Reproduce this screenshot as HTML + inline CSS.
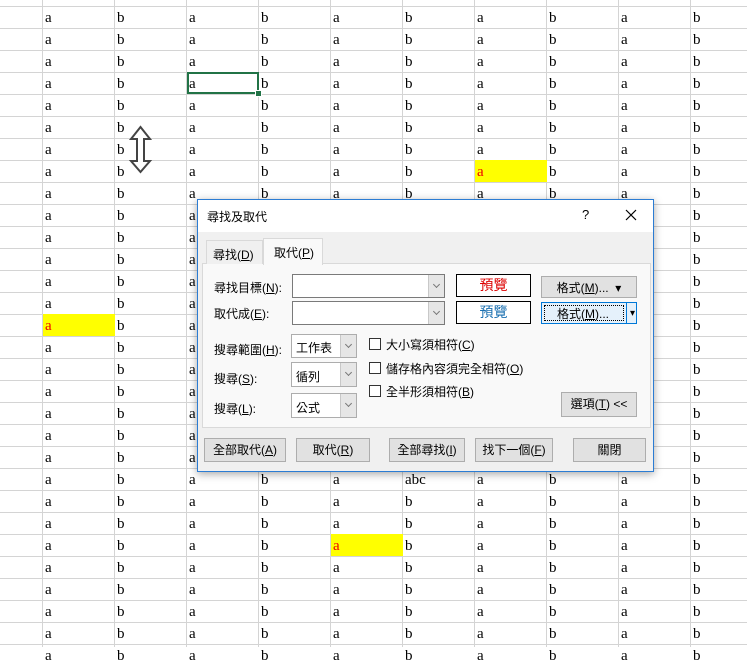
<!DOCTYPE html>
<html><head><meta charset="utf-8"><style>
body{margin:0;width:747px;height:647px;overflow:hidden;position:relative;background:#fff;font-family:"Liberation Serif","Noto Serif CJK SC",serif}
#grid{position:absolute;left:0;top:0;width:747px;height:647px;
background-image:linear-gradient(to right,transparent 71px,#d4d4d4 71px),linear-gradient(to bottom,transparent 21px,#d4d4d4 21px);
background-size:72px 100%,100% 22px;background-position:-29px 0,0 -15px}
table{position:absolute;left:0;top:-16px;width:763px;border-collapse:collapse;table-layout:fixed;font-size:15px;color:#000}
td{height:22px;padding:0 0 0 2px;vertical-align:bottom;line-height:19px;overflow:hidden;white-space:nowrap;box-sizing:border-box}
td.y{background:#ffff00;color:#e00}
#dlg,#dlg *{font-family:"Liberation Sans","Noto Sans CJK TC",sans-serif}
.d{position:absolute;font-size:12px;color:#000;white-space:nowrap}
#dlg{position:absolute;left:197px;top:199px;width:455px;height:271px;border:1px solid #2b7cd3;background:#f0f0f0;box-shadow:0 2px 8px rgba(0,0,0,.35)}
.b{position:absolute;background:#e1e1e1;border:1px solid #adadad;box-sizing:border-box;text-align:center;font-size:12px;line-height:22px;white-space:nowrap}
.cb{position:absolute;background:#fff;border:1px solid #7a7a7a;box-sizing:border-box}
.ar{position:absolute;top:0;right:0;width:16px;height:100%;background:#e6e6e6;border-left:1px solid #c8c8c8;box-sizing:border-box}
.ar:after{content:"";position:absolute;left:5px;top:7px;width:4px;height:4px;border-right:1px solid #777;border-bottom:1px solid #777;transform:rotate(45deg)}
.ck{position:absolute;width:12px;height:12px;border:1px solid #333;background:#fff;box-sizing:border-box}
u{text-decoration:underline}
</style></head><body>
<div id="grid"></div>
<table>
<colgroup><col style="width:43px"><col style="width:72px"><col style="width:72px"><col style="width:72px"><col style="width:72px"><col style="width:72px"><col style="width:72px"><col style="width:72px"><col style="width:72px"><col style="width:72px"><col style="width:72px"></colgroup>
<tr><td><td>a<td>b<td>a<td>b<td>a<td>b<td>a<td>b<td>a<td>b
<tr><td><td>a<td>b<td>a<td>b<td>a<td>b<td>a<td>b<td>a<td>b
<tr><td><td>a<td>b<td>a<td>b<td>a<td>b<td>a<td>b<td>a<td>b
<tr><td><td>a<td>b<td>a<td>b<td>a<td>b<td>a<td>b<td>a<td>b
<tr><td><td>a<td>b<td style="outline:2px solid #217346;outline-offset:-2px;position:relative;overflow:visible">a<span style="position:absolute;right:-3px;bottom:-3px;width:5px;height:5px;background:#217346;border:1px solid #fff"></span><td>b<td>a<td>b<td>a<td>b<td>a<td>b
<tr><td><td>a<td>b<td>a<td>b<td>a<td>b<td>a<td>b<td>a<td>b
<tr><td><td>a<td>b<td>a<td>b<td>a<td>b<td>a<td>b<td>a<td>b
<tr><td><td>a<td>b<td>a<td>b<td>a<td>b<td>a<td>b<td>a<td>b
<tr><td><td>a<td>b<td>a<td>b<td>a<td>b<td class="y">a<td>b<td>a<td>b
<tr><td><td>a<td>b<td>a<td>b<td>a<td>b<td>a<td>b<td>a<td>b
<tr><td><td>a<td>b<td>a<td>b<td>a<td>b<td>a<td>b<td>a<td>b
<tr><td><td>a<td>b<td>a<td>b<td>a<td>b<td>a<td>b<td>a<td>b
<tr><td><td>a<td>b<td>a<td>b<td>a<td>b<td>a<td>b<td>a<td>b
<tr><td><td>a<td>b<td>a<td>b<td>a<td>b<td>a<td>b<td>a<td>b
<tr><td><td>a<td>b<td>a<td>b<td>a<td>b<td>a<td>b<td>a<td>b
<tr><td><td class="y">a<td>b<td>a<td>b<td>a<td>b<td>a<td>b<td>a<td>b
<tr><td><td>a<td>b<td>a<td>b<td>a<td>b<td>a<td>b<td>a<td>b
<tr><td><td>a<td>b<td>a<td>b<td>a<td>b<td>a<td>b<td>a<td>b
<tr><td><td>a<td>b<td>a<td>b<td>a<td>b<td>a<td>b<td>a<td>b
<tr><td><td>a<td>b<td>a<td>b<td>a<td>b<td>a<td>b<td>a<td>b
<tr><td><td>a<td>b<td>a<td>b<td>a<td>b<td>a<td>b<td>a<td>b
<tr><td><td>a<td>b<td>a<td>b<td>a<td>b<td>a<td>b<td>a<td>b
<tr><td><td>a<td>b<td>a<td>b<td>a<td>abc<td>a<td>b<td>a<td>b
<tr><td><td>a<td>b<td>a<td>b<td>a<td>b<td>a<td>b<td>a<td>b
<tr><td><td>a<td>b<td>a<td>b<td>a<td>b<td>a<td>b<td>a<td>b
<tr><td><td>a<td>b<td>a<td>b<td class="y">a<td>b<td>a<td>b<td>a<td>b
<tr><td><td>a<td>b<td>a<td>b<td>a<td>b<td>a<td>b<td>a<td>b
<tr><td><td>a<td>b<td>a<td>b<td>a<td>b<td>a<td>b<td>a<td>b
<tr><td><td>a<td>b<td>a<td>b<td>a<td>b<td>a<td>b<td>a<td>b
<tr><td><td>a<td>b<td>a<td>b<td>a<td>b<td>a<td>b<td>a<td>b
<tr><td><td>a<td>b<td>a<td>b<td>a<td>b<td>a<td>b<td>a<td>b
</table>
<svg style="position:absolute;left:0;top:0" width="747" height="647"><polygon points="140.5,127 131,139 137,139 137,161 131,161 140.5,172 150,161 144,161 144,139 150,139" fill="#fff" stroke="#444" stroke-width="2" stroke-linejoin="miter"/></svg>

<div id="dlg">
 <div style="position:absolute;left:0;top:0;width:455px;height:32px;background:#fff"></div>
 <div class="d" style="left:9px;top:8px">尋找及取代</div>
 <div class="d" style="left:384px;top:7px;font-size:13px">?</div>
 <svg style="position:absolute;left:427px;top:9px" width="12" height="12"><path d="M1 1L11 11M11 1L1 11" stroke="#000" stroke-width="1.2"/></svg>
 <div style="position:absolute;left:4px;top:63px;width:449px;height:165px;background:#f9f9f9;border:1px solid #d9d9d9;box-sizing:border-box"></div>
 <div style="position:absolute;left:8px;top:40px;width:57px;height:24px;border:1px solid #d9d9d9;border-bottom:none;box-sizing:border-box;background:#f0f0f0"></div>
 <div class="d" style="left:15px;top:46px">尋找(<u>D</u>)</div>
 <div style="position:absolute;left:65px;top:38px;width:60px;height:27px;border:1px solid #d9d9d9;border-bottom:none;box-sizing:border-box;background:#f9f9f9"></div>
 <div class="d" style="left:76px;top:44px">取代(<u>P</u>)</div>

 <div class="d" style="left:16px;top:79px">尋找目標(<u>N</u>):</div>
 <div class="cb" style="left:94px;top:74px;width:153px;height:24px"><div class="ar"></div></div>
 <div style="position:absolute;left:258px;top:74px;width:75px;height:23px;border:1px solid #000;background:#fff;box-sizing:border-box;text-align:center;color:#d00;font-size:14px;line-height:21px">預覽</div>
 <div class="b" style="left:343px;top:76px;width:96px;height:22px">格式(<u>M</u>)...&nbsp;&nbsp;▾</div>

 <div class="d" style="left:16px;top:105px">取代成(<u>E</u>):</div>
 <div class="cb" style="left:94px;top:101px;width:153px;height:24px"><div class="ar"></div></div>
 <div style="position:absolute;left:258px;top:101px;width:75px;height:23px;border:1px solid #000;background:#fff;box-sizing:border-box;text-align:center;color:#1a6fb0;font-size:14px;line-height:21px">預覽</div>
 <div class="b" style="left:343px;top:102px;width:96px;height:22px;border:1px solid #0078d7;background:#e5f1fb"><div style="position:absolute;left:2px;top:2px;width:80px;height:16px;border:1px dotted #000;box-sizing:border-box"></div><span style="position:relative;margin-left:-12px">格式(<u>M</u>)...</span><span style="position:absolute;left:84px;top:0;height:20px;border-left:1px solid #0078d7;width:11px;font-size:10px">▾</span></div>

 <div class="d" style="left:16px;top:141px">搜尋範圍(<u>H</u>):</div>
 <div class="cb" style="left:93px;top:134px;width:66px;height:24px;border-color:#adadad"><div class="ar"></div><span class="d" style="left:4px;top:4px">工作表</span></div>
 <div class="d" style="left:16px;top:170px">搜尋(<u>S</u>):</div>
 <div class="cb" style="left:93px;top:162px;width:66px;height:25px;border-color:#adadad"><div class="ar"></div><span class="d" style="left:4px;top:5px">循列</span></div>
 <div class="d" style="left:16px;top:200px">搜尋(<u>L</u>):</div>
 <div class="cb" style="left:93px;top:193px;width:66px;height:25px;border-color:#adadad"><div class="ar"></div><span class="d" style="left:4px;top:5px">公式</span></div>

 <div class="ck" style="left:171px;top:138px"></div><div class="d" style="left:188px;top:136px">大小寫須相符(<u>C</u>)</div>
 <div class="ck" style="left:171px;top:162px"></div><div class="d" style="left:188px;top:160px">儲存格內容須完全相符(<u>O</u>)</div>
 <div class="ck" style="left:171px;top:185px"></div><div class="d" style="left:188px;top:183px">全半形須相符(<u>B</u>)</div>
 <div class="b" style="left:363px;top:192px;width:76px;height:25px;line-height:23px">選項(<u>T</u>) &lt;&lt;</div>

 <div class="b" style="left:6px;top:238px;width:82px;height:24px">全部取代(<u>A</u>)</div>
 <div class="b" style="left:98px;top:238px;width:74px;height:24px">取代(<u>R</u>)</div>
 <div class="b" style="left:191px;top:238px;width:76px;height:24px">全部尋找(<u>I</u>)</div>
 <div class="b" style="left:277px;top:238px;width:78px;height:24px">找下一個(<u>F</u>)</div>
 <div class="b" style="left:375px;top:238px;width:73px;height:24px">關閉</div>
</div>
</body></html>
